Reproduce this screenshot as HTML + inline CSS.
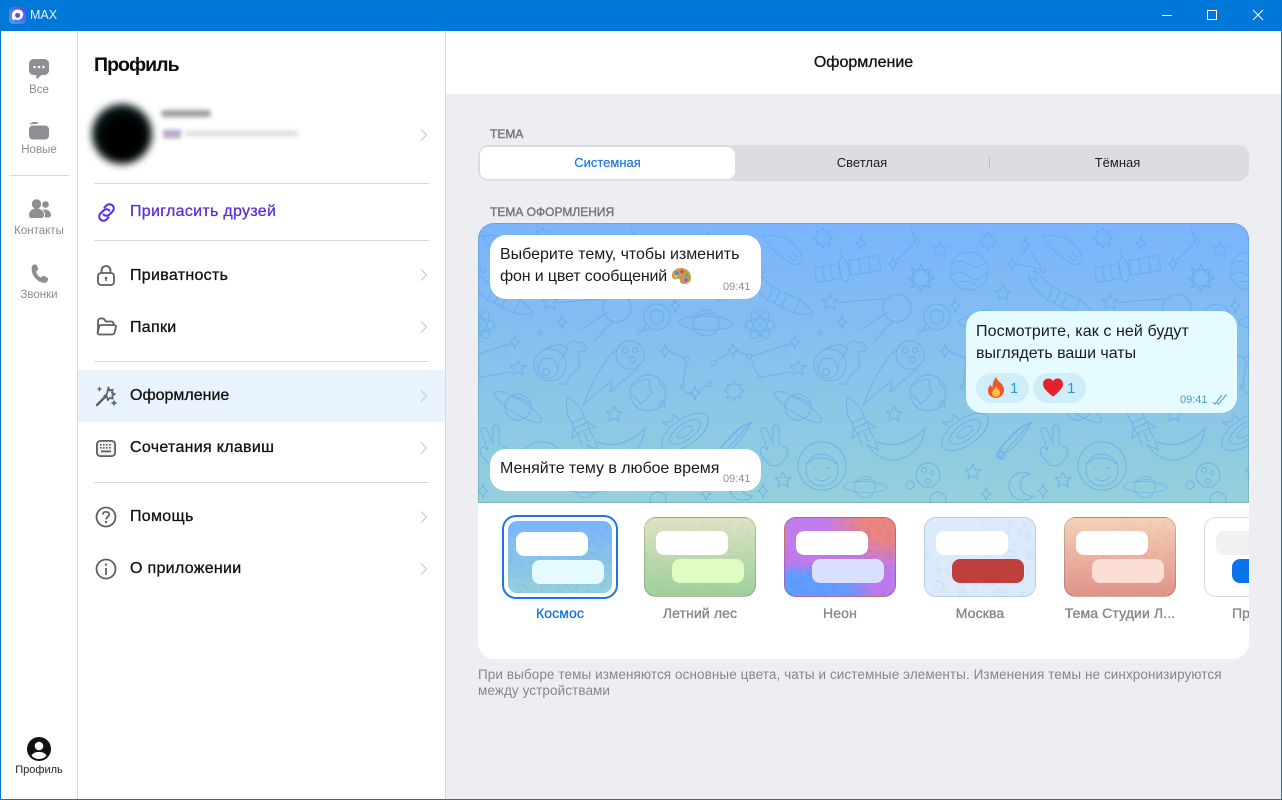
<!DOCTYPE html>
<html lang="ru"><head><meta charset="utf-8"><title>MAX</title>
<style>
*{box-sizing:border-box}
html,body{margin:0;padding:0;width:1282px;height:800px;overflow:hidden;background:#fff;font-family:"Liberation Sans","DejaVu Sans",sans-serif}
.a{position:absolute}
.t{position:absolute;white-space:nowrap}
.m{font-size:16px;color:#111;-webkit-text-stroke:.3px currentColor;line-height:20px;left:130px;letter-spacing:.3px}
.sb{font-size:11.5px;color:#8b8b90;text-align:center;left:1px;width:76px;line-height:14px}
.ln{position:absolute;left:94px;width:335px;height:1px;background:#d9d9dc}
.sec{font-size:12px;color:#75767b;-webkit-text-stroke:.4px currentColor;left:490px;line-height:14px}
.seg{font-size:13px;line-height:16px;top:155px;text-align:center}
.bub{position:absolute;background:#fff;border-radius:16px;width:271px}
.btx{position:absolute;left:10px;font-size:16px;line-height:22px;color:#1a1a1a;white-space:nowrap;letter-spacing:-.02px}
.tm{position:absolute;font-size:11px;color:#8e8e93;line-height:12px;white-space:nowrap}
.th{position:absolute;top:517px;width:112px;height:80px;border-radius:12px;overflow:hidden;border:1px solid rgba(0,0,0,.16)}
.b1,.b2{position:absolute;width:72px;height:24px;border-radius:8px}
.b1{left:11px;top:13px;background:#fff}
.b2{left:27px;top:41px}
.lb{position:absolute;top:605px;width:130px;text-align:center;font-size:14px;line-height:16px;color:#85868b;-webkit-text-stroke:.35px currentColor;white-space:nowrap;letter-spacing:.12px}
</style></head><body>
<div class="a" style="inset:0;border:1px solid #0078d4;border-top:0;z-index:20;pointer-events:none"></div>
<!-- title bar -->
<div class="a" style="left:0;top:0;width:1282px;height:31px;background:#0078d7"></div>
<svg class="a" style="left:9px;top:7px" width="17" height="17" viewBox="0 0 17 17"><defs><linearGradient id="lg" x1="0" y1="1" x2="1" y2="0"><stop offset="0" stop-color="#3aa6f5"/><stop offset="1" stop-color="#6a3ee8"/></linearGradient></defs><rect width="17" height="17" rx="4" fill="url(#lg)"/><path d="M8.600 2.500C5.200 2.500 2.800 5.100 2.800 8.400c0 1.600.3 2.900.9 4.100.3.700.9.900 1.400.5l.9-.7c.8.4 1.600.6 2.500.6 3.300 0 5.700-2.400 5.700-5.500S11.900 2.500 8.600 2.500z" fill="#fff"/><circle cx="8.600" cy="8.400" r="2.500" fill="#5a55e0"/></svg>
<div class="t" style="left:30px;top:8px;font-size:12.500px;line-height:15px;color:#e8f3fc">MAX</div>
<svg class="a" style="left:1150px;top:0" width="132" height="31" fill="none" stroke="#fff"><path d="M12 15.500H22"/><rect x="57.500" y="10.500" width="9" height="9"/><path d="M103 10L113 20M113 10L103 20"/></svg>

<!-- left rail -->
<div class="a" style="left:77px;top:31px;width:1px;height:768px;background:#d9d9dc"></div>
<svg class="a" style="left:29px;top:59px" width="20" height="20" viewBox="0 0 20 20"><path d="M4.500 0h11A4.500 4.500 0 0 1 20 4.500v7a4.500 4.500 0 0 1-4.500 4.500h-3.200L8.800 19.500c-.7.600-1.500.2-1.500-.7V16H4.500A4.500 4.500 0 0 1 0 11.500v-7A4.500 4.500 0 0 1 4.500 0z" fill="#8e8e93"/><circle cx="5.500" cy="8" r="1.300" fill="#fff"/><circle cx="10" cy="8" r="1.300" fill="#fff"/><circle cx="14.500" cy="8" r="1.300" fill="#fff"/></svg>
<div class="t sb" style="top:83px">Все</div>
<svg class="a" style="left:29px;top:121px" width="20" height="19" viewBox="0 0 20 19"><path d="M1 4.500C1 2 2.500 1 5 1h2.500C9 1 9.500 2.500 8 3H3.500C2 3 1 3.800 1 4.500z" fill="#8e8e93"/><rect x="0" y="4.500" width="20" height="14" rx="4" fill="#8e8e93"/></svg>
<div class="t sb" style="top:143px">Новые</div>
<div class="a" style="left:9px;top:175px;width:60px;height:1px;background:#d9d9dc"></div>
<svg class="a" style="left:29px;top:199px" width="22" height="20" viewBox="0 0 22 20" fill="#8e8e93"><circle cx="7.500" cy="5" r="4.700"/><circle cx="16.500" cy="5.500" r="3.300"/><path d="M0 16c0-4.500 3.500-6.500 7.500-6.500S15 11.500 15 16c0 2-1 3-3 3H3c-2 0-3-1-3-3z"/><path d="M16 18.500h3c2 0 3-1 3-2.500 0-3-2.500-5.500-6.500-5.500-.7 0-1.300.1-1.800.2 1.400 1.400 2.300 3.200 2.300 5.300 0 1-.1 1.800 0 2.500z"/></svg>
<div class="t sb" style="top:224px">Контакты</div>
<svg class="a" style="left:31px;top:264px" width="18" height="20" viewBox="0 0 18 20"><path d="M1 2.200C1.500 1 3 .2 4.300.4 5.300.6 5.800 1.200 6.200 2l.9 2.300c.3.800.1 1.500-.5 2L5.500 7.200c-.3.300-.3.600-.2 1 .7 2.200 2 3.900 4 5 .4.200.7.100 1-.1l1.200-.9c.7-.5 1.400-.5 2.100-.1l2.200 1.300c1 .6 1.500 1.400 1.200 2.500-.4 1.800-2 3.200-3.900 3-4.300-.4-8.100-3.200-10.500-7.100C.8 8.700.2 5.200 1 2.200z" fill="#8e8e93"/></svg>
<div class="t sb" style="top:288px">Звонки</div>
<svg class="a" style="left:27px;top:737px" width="24" height="24" viewBox="0 0 24 24"><circle cx="12" cy="12" r="12" fill="#111"/><circle cx="12" cy="9" r="4.300" fill="#fff"/><path d="M4.500 18.500C6 15.800 8.800 15 12 15s6 .8 7.500 3.500C17.800 20.800 15 22 12 22s-5.800-1.200-7.500-3.500z" fill="#fff"/></svg>
<div class="t sb" style="top:763px;color:#222;font-size:11px">Профиль</div>

<!-- profile panel -->
<div class="a" style="left:445px;top:31px;width:1px;height:768px;background:#d9d9dc"></div>
<div class="t" style="left:94px;top:53px;font-size:19.500px;font-weight:700;line-height:24px;color:#0b0b0b;letter-spacing:-.95px">Профиль</div>
<div class="a" style="left:92px;top:104px;width:60px;height:60px;border-radius:50%;background:radial-gradient(circle at 52% 55%,#000 0 40%,#0a1b1e 70%,#1a4045 100%);filter:blur(4px)"></div>
<div class="a" style="left:161px;top:110px;width:50px;height:7px;background:#9b9b9d;border-radius:4px;filter:blur(2.500px)"></div>
<div class="a" style="left:163px;top:130px;width:18px;height:9px;background:linear-gradient(#9a9dd0,#c0acc6 60%,#eac0c8);filter:blur(2px)"></div>
<div class="a" style="left:185px;top:131px;width:113px;height:5px;background:#d8d8da;border-radius:3px;filter:blur(2.500px)"></div>
<div class="ln" style="top:183px"></div><div class="ln" style="top:240px"></div><div class="ln" style="top:361px"></div><div class="ln" style="top:482px"></div>
<div class="a" style="left:78px;top:370px;width:367px;height:52px;background:#e8f3fe"></div>

<svg class="a" style="left:96px;top:202px" width="21" height="21" viewBox="0 0 21 21" fill="none" stroke="#5b2fd8" stroke-width="2" stroke-linecap="round"><path d="M8.500 5.500l2-2a4.200 4.200 0 0 1 6 0 4.200 4.200 0 0 1 0 6l-3 3a4.200 4.200 0 0 1-6 0"/><path d="M12.500 15.500l-2 2a4.200 4.200 0 0 1-6 0 4.200 4.200 0 0 1 0-6l3-3a4.200 4.200 0 0 1 6 0"/></svg>
<div class="t m" style="top:202px;color:#5b2fd8">Пригласить друзей</div>

<svg class="a" style="left:97px;top:265px" width="18" height="21" viewBox="0 0 18 21" fill="none" stroke="#5f5f63" stroke-width="1.800"><rect x="1" y="8" width="16" height="12" rx="3"/><path d="M4.500 8V5.500a4.500 4.500 0 0 1 9 0V8"/><circle cx="9" cy="13" r="1.300" fill="#5f5f63" stroke="none"/><path d="M9 13.500V16" stroke-width="1.400"/></svg>
<div class="t m" style="top:266px">Приватность</div>

<svg class="a" style="left:96px;top:317px" width="21" height="19" viewBox="0 0 21 19" fill="none" stroke="#5f5f63" stroke-width="1.800" stroke-linejoin="round"><path d="M2 15.500V4a2.500 2.500 0 0 1 2.500-2.500h3L10 4.500h5.500A2 2 0 0 1 17.500 6.500V8"/><path d="M5 8h13.200c1.300 0 2 1 1.700 2.200l-1.200 5c-.3 1.300-1.200 2.300-2.700 2.300H3.500C2 17.500 1.300 16.500 1.700 15.200L3 10C3.300 8.800 4 8 5 8z"/></svg>
<div class="t m" style="top:318px">Папки</div>

<svg class="a" style="left:96px;top:385px" width="22" height="22" viewBox="0 0 22 22" fill="#5f5f63"><path d="M1 20L10 11" stroke="#5f5f63" stroke-width="2.400" stroke-linecap="round"/><path d="M12.500 2.500l1 3 3.200-.8-.8 3.200 3 1-2.700 1.800.6 3-3-.8-2 2.300-.6-3.100-3-.9 2.500-1.800z" fill="none" stroke="#5f5f63" stroke-width="1.700" stroke-linejoin="round"/><path d="M3.500 1L4.300 3.200 6.500 4 4.300 4.800 3.500 7 2.700 4.800.5 4 2.700 3.200z"/><path d="M18 14.500l1 2.500 2.500 1-2.500 1-1 2.500-1-2.500-2.500-1 2.500-1z"/></svg>
<div class="t m" style="top:386px;letter-spacing:0">Оформление</div>

<svg class="a" style="left:96px;top:440px" width="20" height="17" viewBox="0 0 20 17"><rect x=".9" y=".9" width="18.200" height="15.200" rx="3.500" fill="#f1f1f2" stroke="#5f5f63" stroke-width="1.800"/><g fill="#5f5f63"><rect x="4" y="4" width="1.600" height="1.600"/><rect x="7" y="4" width="1.600" height="1.600"/><rect x="10" y="4" width="1.600" height="1.600"/><rect x="13" y="4" width="1.600" height="1.600"/><rect x="4" y="7" width="1.600" height="1.600"/><rect x="7" y="7" width="1.600" height="1.600"/><rect x="10" y="7" width="1.600" height="1.600"/><rect x="13" y="7" width="1.600" height="1.600"/><rect x="5" y="10.500" width="10" height="1.800"/></g></svg>
<div class="t m" style="top:438px">Сочетания клавиш</div>

<svg class="a" style="left:95px;top:506px" width="22" height="22" viewBox="0 0 22 22" fill="none" stroke="#5f5f63" stroke-width="1.800"><circle cx="11" cy="11" r="9.500"/><path d="M7.800 8.500C8 6.600 9.400 5.800 11 5.800c1.900 0 3.200 1.100 3.200 2.700 0 2.400-3.100 2.500-3.100 4.900" stroke-width="1.700"/><circle cx="11" cy="16" r="1.200" fill="#5f5f63" stroke="none"/></svg>
<div class="t m" style="top:507px">Помощь</div>

<svg class="a" style="left:95px;top:558px" width="22" height="22" viewBox="0 0 22 22" fill="none" stroke="#5f5f63" stroke-width="1.800"><circle cx="11" cy="11" r="9.500"/><circle cx="11" cy="6.700" r="1.200" fill="#5f5f63" stroke="none"/><path d="M11 10v7"/></svg>
<div class="t m" style="top:559px">О приложении</div>

<svg class="a" style="left:415px;top:120px" width="20" height="460" viewBox="0 0 20 460" fill="none" stroke="#cfd0d3" stroke-width="1.300"><path d="M6 9.500l5.500 5.500L6 20.500"/><path d="M6 149.500l5.500 5.500L6 160.500"/><path d="M6 201.500l5.500 5.500L6 212.500"/><path d="M6 270.500l5.500 5.500L6 281.500"/><path d="M6 322.500l5.500 5.500L6 333.500"/><path d="M6 391.500l5.500 5.500L6 402.500"/><path d="M6 443.500l5.500 5.500L6 454.500"/></svg>

<!-- right -->
<div class="a" style="left:446px;top:94px;width:836px;height:706px;background:#edeef2"></div>
<div class="t" style="left:446px;width:835px;top:54px;text-align:center;font-size:16px;line-height:18px;color:#111;-webkit-text-stroke:.3px #111">Оформление</div>
<div class="t sec" style="top:127px">ТЕМА</div>
<div class="a" style="left:478px;top:145px;width:771px;height:36px;background:#dcdde1;border-radius:11px"></div>
<div class="a" style="left:480px;top:147px;width:255px;height:32px;background:#fff;border-radius:8px"></div>
<div class="a" style="left:989px;top:157px;width:1px;height:12px;background:#bdbec3"></div>
<div class="t seg" style="left:480px;width:255px;color:#1a78e6;-webkit-text-stroke:.2px #1a78e6">Системная</div>
<div class="t seg" style="left:735px;width:254px;color:#222">Светлая</div>
<div class="t seg" style="left:990px;width:255px;color:#222">Тёмная</div>
<div class="t sec" style="top:205px">ТЕМА ОФОРМЛЕНИЯ</div>

<div class="a" style="left:478px;top:223px;width:771px;height:436px;background:#fff;border-radius:16px"></div>

<!-- preview -->
<div class="a" style="left:478px;top:223px;width:771px;height:280px;border-radius:16px 16px 0 0;overflow:hidden;background:linear-gradient(#7ab4fc,#94d0db);box-shadow:inset 0 0 0 1px rgba(60,90,120,.22)">
<svg class="a" style="left:0;top:1px" width="771" height="279" viewBox="478 224 771 279">
<defs>
<path id="s5" d="M0-8 2.400-2.600 8-2.200 3.800 1.400 5 7 0 4.100-5 7-3.800 1.400-8-2.200-2.400-2.600Z"/>
<path id="s8" d="M0-10 2.300-5.500 7.100-7.100 5.500-2.300 10 0 5.500 2.300 7.100 7.100 2.300 5.500 0 10-2.300 5.500-7.100 7.100-5.500 2.300-10 0-5.500-2.300-7.100-7.100-2.300-5.500Z"/>
<path id="sp" d="M0-7Q1-1 5 0 1 1 0 7-1 1-5 0-1-1 0-7Z"/>
<g id="sat"><circle r="13"/><path d="M-9-7Q0-12 9-7"/><ellipse rx="27" ry="7" transform="rotate(12)"/></g>
<g id="tile" fill="none" stroke="currentColor" stroke-width="1" stroke-linejoin="round" stroke-linecap="round">
<path d="M1042 236Q1072 232 1082 256 1084 266 1073 264 1058 258 1042 236Z"/><use href="#s5" transform="translate(1073,257) scale(.6)"/>
<g transform="translate(1127,269) rotate(-10)"><rect x="-32" y="-7" width="25" height="15"/><path d="M-24-7V8M-16-7V8"/><ellipse cx="-3" cy="0" rx="5" ry="12"/><rect x="3" y="-8" width="30" height="15"/><path d="M13-8V7M23-8V7M-3-12V-19"/></g>
<circle cx="921" cy="278" r="8"/><use href="#s8" transform="translate(921,278) scale(1.350)"/>
<circle cx="969" cy="271" r="19"/><path d="M951 265Q960 258 968 264T987 262M951 276Q960 268 968 276T987 272M956 284Q966 278 976 285"/>
<use href="#s8" transform="translate(1103,238)"/><use href="#s5" transform="translate(940,250)"/><use href="#s8" transform="translate(988,241) scale(.9)"/>
<use href="#sp" transform="translate(1141,243)"/><use href="#sp" transform="translate(1025,245)"/><use href="#sp" transform="translate(1012,264)"/>
<path d="M1025 252L1015 260M1030 250L1041 267M1017 264L1040 269"/><circle cx="1043" cy="270" r="2.500"/>
<path d="M910 225L915 238M914 244L897 260"/><circle cx="917" cy="241" r="2.500"/><use href="#sp" transform="translate(893,264)"/>
<g transform="translate(1070,303) rotate(25)"><path d="M-22-7H8Q18-6 25 0 18 6 8 7H-22Z"/><path d="M-14-7V7M-6-7V7M8-7V7M-22-7L-47-15-38-6-50-7-38 2-22 7"/></g>
<use href="#s5" transform="translate(1003,293)"/><use href="#s5" transform="translate(1110,302)"/>
<circle cx="897" cy="308" r="14"/><path d="M860 330L888 312M875 340L893 321M884 299Q860 300 838 303"/>
<circle cx="937" cy="317" r="13"/><circle cx="937" cy="317" r="7"/><path d="M926 324L923 331 931 329"/><circle cx="919" cy="332" r="2"/><use href="#sp" transform="translate(955,306)"/>
<g transform="translate(706,323) rotate(-10)"><use href="#sat"/></g>
<g transform="translate(760,325)"><ellipse rx="15" ry="6"/><ellipse rx="15" ry="6" transform="rotate(60)"/><ellipse rx="15" ry="6" transform="rotate(120)"/><circle r="2"/></g>
<use href="#sp" transform="translate(842,322)"/><circle cx="820" cy="333" r="2"/>
<circle cx="550" cy="365" r="16"/><circle cx="548" cy="368" r="10"/><circle cx="546" cy="372" r="3.500"/><path d="M545 350Q556 341 568 348L562 358M566 345Q574 338 578 343 584 340 587 350L578 352 580 366 570 376 566 384H558"/>
<circle cx="630" cy="355" r="14"/><circle cx="625" cy="350" r="3"/><circle cx="635" cy="350" r="2.500"/><circle cx="632" cy="360" r="3"/><path d="M618 348Q600 362 583 405L612 380 610 392 638 368"/>
<use href="#sp" transform="translate(665,351)"/><circle cx="687" cy="359" r="2.500"/><path d="M670 352L685 358M686 362L683 385M684 391L691 395"/><circle cx="682" cy="387" r="2"/><use href="#sp" transform="translate(695,393)"/><path d="M698 391L706 386"/><circle cx="709" cy="384" r="2.500"/>
<circle cx="714" cy="363" r="2.500"/><path d="M716 361L728 353M737 351L747 355M752 356L790 344M751 359L757 374M762 377L790 372"/><use href="#sp" transform="translate(733,350)"/><circle cx="749" cy="356" r="2.500"/><use href="#sp" transform="translate(795,342)"/><circle cx="759" cy="377" r="2"/><use href="#s5" transform="translate(798,368)"/>
<circle cx="648" cy="393" r="18"/><path d="M634 385Q640 378 650 380 648 388 652 392 646 402 640 404 636 396 632 395M658 378Q660 386 665 390"/><circle cx="662" cy="404" r="3"/>
<g transform="translate(518,407) rotate(20)"><use href="#sat"/></g>
<g transform="translate(578,420) rotate(-25)"><path d="M-7-8Q-6-18 0-25 6-18 7-8V12H-7Z"/><path d="M-7 0H7M-7 6H7M-7 4L-13 14-7 13M7 4L13 14 7 13M-6 14L-7 24M0 14V24M6 14L7 24"/></g>
<use href="#s5" transform="translate(614,414)"/><use href="#s8" transform="translate(734,391)"/>
<g transform="translate(685,432) rotate(-35)"><ellipse rx="27" ry="13"/><ellipse rx="18" ry="8"/><ellipse rx="9" ry="4"/><path d="M-10-14L-13-21-4-16 0-21 3-13"/></g>
<path d="M752 422Q728 430 718 458 732 450 740 440 746 432 752 422Z"/><circle cx="722" cy="455" r="3"/>
<path d="M925 428Q922 454 897 460 880 462 867 445L878 450 875 441Q902 452 925 428Z"/>
<path d="M770 465L762 456Q758 450 763 447L768 450 761 432Q761 426 766 428L773 443 773 426Q776 423 779 428V444L786 448Q790 452 785 459L781 464Q775 467 770 465Z"/>
<circle cx="822" cy="466" r="24"/><circle cx="822" cy="470" r="16"/><path d="M806 464Q820 452 838 464M814 468h3M827 468h3M815 478Q822 484 830 477"/>
<use href="#s5" transform="translate(783,480)"/><use href="#s5" transform="translate(973,472)"/>
<circle cx="928" cy="475" r="12"/><circle cx="924" cy="470" r="2.500"/><circle cx="932" cy="473" r="2"/><circle cx="928" cy="481" r="2.500"/>
<circle cx="910" cy="485" r="4"/><circle cx="938" cy="500" r="8"/>
<path d="M1030 474A14 14 0 1 0 1033 496 11 11 0 0 1 1030 474Z"/><use href="#s5" transform="translate(1063,480)"/><use href="#sp" transform="translate(1043,491)"/><use href="#sp" transform="translate(986,494)"/>
<g transform="translate(1145,487) rotate(-10) scale(.8)"><use href="#sat"/></g>
<path d="M1012 437Q1000 445 996 456 1000 458 1003 454 1010 446 1030 423 1018 428 1012 437Z"/><circle cx="1001" cy="455" r="4"/>
</g>
</defs>
<g color="#5aa4ec" opacity=".6"><use href="#tile" x="-560"/><use href="#tile" x="-280"/><use href="#tile"/><use href="#tile" x="280"/><use href="#tile" x="560"/></g>
</svg>
</div>

<div class="bub" style="left:490px;top:235px;height:64px">
<div class="btx" style="top:9px">Выберите тему, чтобы изменить</div>
<div class="btx" style="top:31px;letter-spacing:-.15px">фон и цвет сообщений</div>
<svg class="a" style="left:181px;top:32px" width="21" height="18" viewBox="0 0 21 18"><path d="M10 1C4.500 1 .5 4.500 1 9c.3 3 3 4 5 3 2-.8 3 .2 3 2 0 2 2 3 5 3 3.500 0 6.500-3 6-7C19.500 4.500 15.500 1 10 1z" fill="#c29a5c"/><circle cx="6" cy="6" r="1.800" fill="#3f8fd6"/><circle cx="11" cy="4.500" r="1.800" fill="#d8473f"/><circle cx="16" cy="8" r="1.800" fill="#6ab04c"/><circle cx="15" cy="13" r="1.800" fill="#8e5fc0"/><circle cx="5" cy="9.500" r="1.500" fill="#e9c23f"/></svg>
<div class="tm" style="left:233px;top:46px">09:41</div></div>

<div class="bub" style="left:966px;top:311px;height:102px;background:#e5fbff">
<div class="btx" style="top:10px;letter-spacing:.1px">Посмотрите, как с ней будут</div>
<div class="btx" style="top:32px">выглядеть ваши чаты</div>
<div class="a" style="left:10px;top:62px;width:53px;height:30px;border-radius:15px;background:#d0eef9"></div>
<div class="a" style="left:67px;top:62px;width:53px;height:30px;border-radius:15px;background:#d0eef9"></div>
<svg class="a" style="left:21px;top:66px" width="18" height="21" viewBox="0 0 18 21"><path d="M9 0c1 4 7 6 8 12 .5 5-3.500 9-8 9s-8.500-3-8-8c.2-2.500 1.500-4 2.500-5.500.3 1.500 1 2.500 2 3C5.500 6.500 6.500 3 9 0z" fill="#f0562a"/><path d="M9 9c.5 2.500 4 3.500 4 7 0 2.500-2 4-4 4s-4-1.500-4-4c0-3 3-4 4-7z" fill="#fdc040"/></svg>
<div class="tm" style="left:44px;top:69px;font-size:15px;line-height:17px;color:#2e9acb">1</div>
<svg class="a" style="left:77px;top:67px" width="20" height="19" viewBox="0 0 21 19"><path d="M10.500 19C4 14 0 10 0 5.800 0 2.500 2.500 0 5.700 0 7.700 0 9.500 1 10.500 2.700 11.500 1 13.300 0 15.300 0 18.500 0 21 2.500 21 5.800 21 10 17 14 10.500 19z" fill="#e5212d"/></svg>
<div class="tm" style="left:101px;top:69px;font-size:15px;line-height:17px;color:#2e9acb">1</div>
<div class="tm" style="left:214px;top:83px;color:#3d9cc9">09:41</div>
<svg class="a" style="left:246px;top:82px" width="16" height="12" viewBox="0 0 16 12" fill="none" stroke="#3d9cc9" stroke-width="1"><path d="M1 9.500l2 1.500L10 2M5 10l1.500 1L14.500 1.500"/></svg>
</div>

<div class="bub" style="left:490px;top:449px;height:42px">
<div class="btx" style="top:9px;letter-spacing:-.05px">Меняйте тему в любое время</div>
<div class="tm" style="left:233px;top:24px">09:41</div></div>

<!-- thumbs -->
<div class="a" style="left:502px;top:515px;width:116px;height:84px;border:2px solid #1a78e0;border-radius:14px"></div>
<div class="a" style="left:508px;top:521px;width:104px;height:72px;border-radius:9px;overflow:hidden;background:linear-gradient(#7ab4fc,#94d0db)">
<svg class="a" style="left:0;top:0" width="104" height="72" viewBox="478 224 280 194"><g color="#5ea6ee" opacity=".55"><use href="#tile" x="-280"/><use href="#tile"/></g></svg>
<div class="b1" style="left:8px;top:11px"></div><div class="b2" style="left:24px;top:39px;background:#e5fbff"></div></div>

<div class="th" style="left:644px;background:linear-gradient(#dde3c4,#9fcf9c)">
<svg class="a" style="left:-1px;top:-1px" width="112" height="80" viewBox="478 224 300 214"><g color="#7fb07c" opacity=".22"><use href="#tile" x="-280"/><use href="#tile"/></g></svg>
<div class="b1"></div><div class="b2" style="background:#dffcc1"></div></div>

<div class="th" style="left:784px;background:radial-gradient(70px 50px at 100% 0,#e9867f 0 45%,transparent 100%),radial-gradient(80px 34px at 12% 100%,#5f9eff 0 60%,transparent 100%),linear-gradient(#c27ded,#bd78ea)">
<svg class="a" style="left:-1px;top:-1px" width="112" height="80" viewBox="478 224 300 214"><g color="#6c3fb0" opacity=".22"><use href="#tile" x="-280"/><use href="#tile"/></g></svg>
<div class="b1"></div><div class="b2" style="background:#dadffe"></div></div>

<div class="th" style="left:924px;background:#dcebfc;border-color:rgba(80,120,160,.25)">
<svg class="a" style="left:-1px;top:-1px" width="112" height="80" viewBox="478 224 300 214"><g color="#a5c8e4" opacity=".5"><use href="#tile" x="-280"/><use href="#tile"/></g></svg>
<div class="b1"></div><div class="b2" style="background:#bf3f3d"></div></div>

<div class="th" style="left:1064px;background:linear-gradient(#f5d1b8,#e0938a)">
<svg class="a" style="left:-1px;top:-1px" width="112" height="80" viewBox="478 224 300 214"><g color="#d98a70" opacity=".28"><use href="#tile" x="-280"/><use href="#tile"/></g></svg>
<div class="b1"></div><div class="b2" style="background:#fcdfd4"></div></div>

<div class="a" style="left:1204px;top:517px;width:45px;height:80px;overflow:hidden">
<div class="th" style="left:0;top:0;background:#fff;border-color:#dcdcde"><div class="b1" style="background:#f1f1f3"></div><div class="b2" style="background:#0a72ea"></div></div></div>

<div class="lb" style="left:495px;color:#1a78e0">Космос</div>
<div class="lb" style="left:635px">Летний лес</div>
<div class="lb" style="left:775px">Неон</div>
<div class="lb" style="left:915px">Москва</div>
<div class="lb" style="left:1055px">Тема Студии Л...</div>
<div class="a" style="left:1204px;top:605px;width:45px;overflow:hidden"><div class="lb" style="position:static;width:auto;text-align:left;margin-left:28px">Пр</div></div>

<div class="t" style="left:478px;top:667px;font-size:13.500px;line-height:16px;color:#85868b;letter-spacing:.09px">При выборе темы изменяются основные цвета, чаты и системные элементы. Изменения темы не синхронизируются<br>между устройствами</div>
</body></html>
